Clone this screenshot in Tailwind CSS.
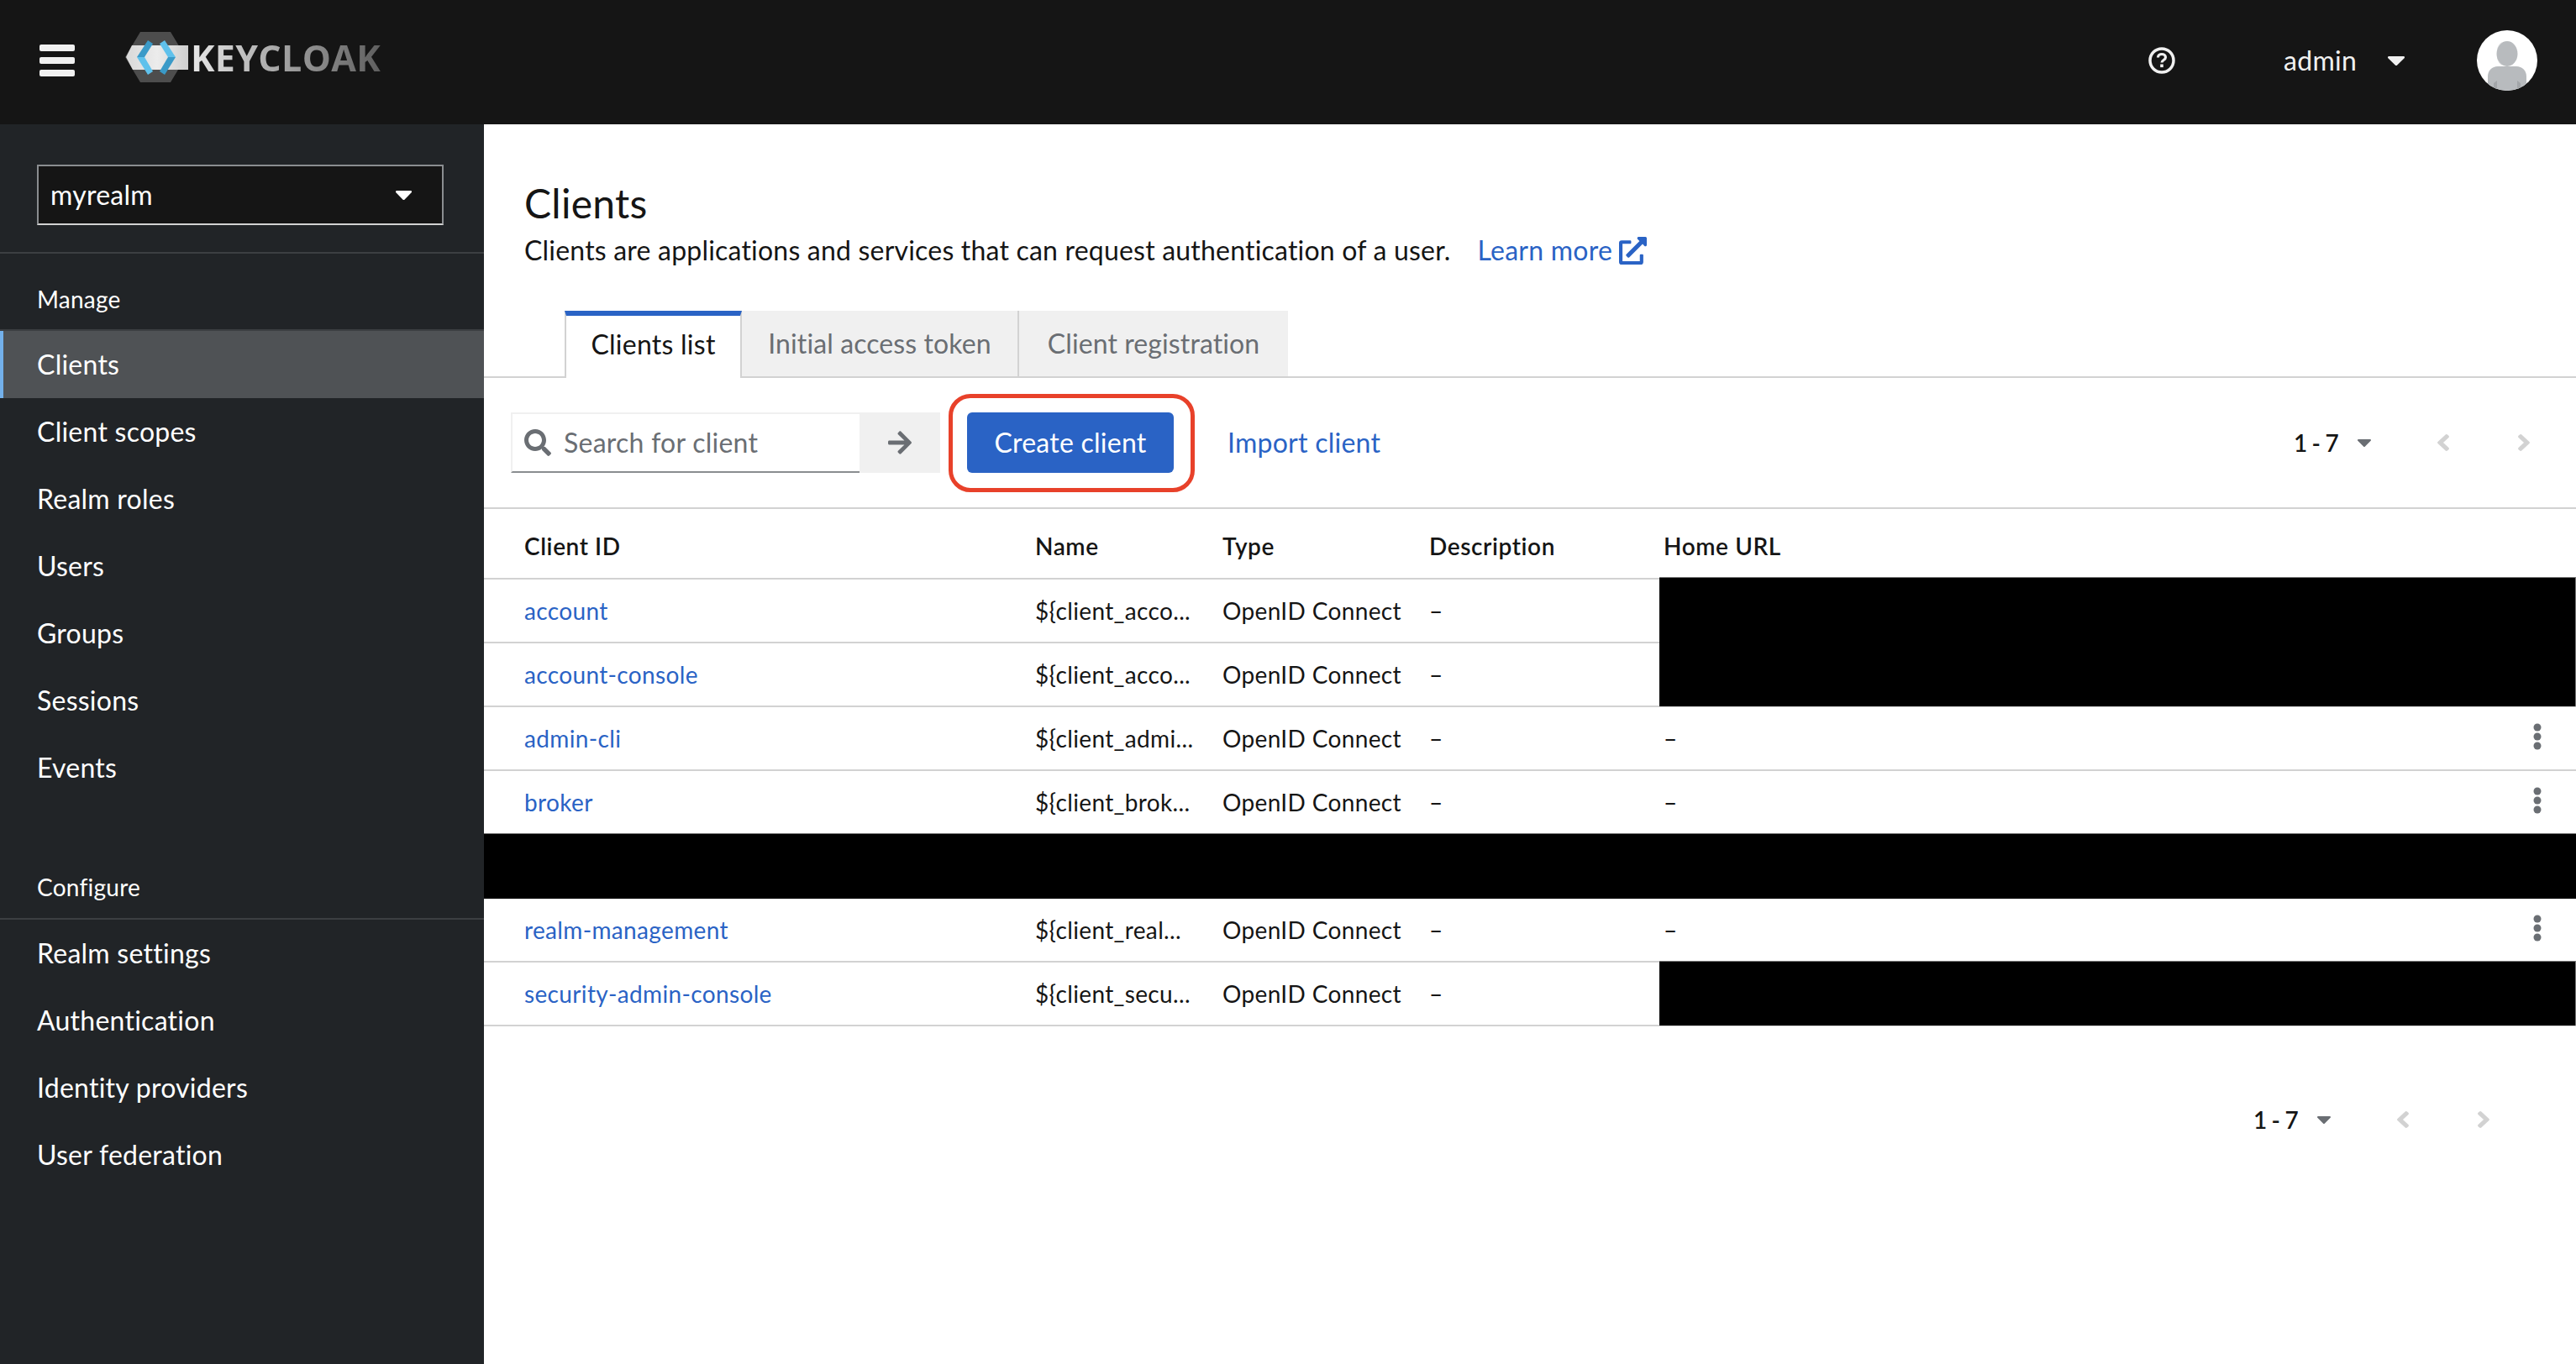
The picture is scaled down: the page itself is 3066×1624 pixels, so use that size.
<!DOCTYPE html>
<html lang="en">
<head>
    <meta charset="UTF-8">
    <title>Keycloak - Clients</title>
    <script src="https://cdn.jsdelivr.net/npm/@tailwindcss/browser@4"></script>
</head>
<body class="bg-white text-[#151515] font-['Lato','Open_Sans',sans-serif] text-[32px] tracking-[0.25px] w-[3066px] h-[1624px] overflow-hidden">
    <!-- Masthead -->
    <header class="h-[148px] pb-[4px] bg-[#151515] flex items-center text-[#f0f0f0]">
        <div class="ml-[47px] w-[42px] h-[38px] flex flex-col justify-between">
            <span class="h-[8px] rounded-[2px] bg-[#f0f0f0]"></span>
            <span class="h-[8px] rounded-[2px] bg-[#f0f0f0]"></span>
            <span class="h-[8px] rounded-[2px] bg-[#f0f0f0]"></span>
        </div>
        <div class="ml-[59px] flex items-center -mt-[8px]">
            <svg class="w-[76px] h-[64px]" viewBox="148 36 76 64">
                <defs>
                    <linearGradient id="band" x1="0" x2="1" y1="0" y2="0">
                        <stop offset="0" stop-color="#d8d8d8"/>
                        <stop offset="0.5" stop-color="#ececec"/>
                        <stop offset="1" stop-color="#cfcfcf"/>
                    </linearGradient>
                </defs>
                <path d="M167 38H203L221 68L203 98H167L149 68z" fill="#4d4d4d"/>
                <path d="M157 54H224V83H158L150 68z" fill="url(#band)"/>
                <path d="M163 68L176 48L182 52L172 68z" fill="#3a9ac8"/>
                <path d="M163 68H172L182 85L176 89z" fill="#5fc1ec"/>
                <path d="M209 68L196 48L190 52L200 68z" fill="#5fc1ec"/>
                <path d="M209 68H200L190 85L196 89z" fill="#3a9ac8"/>
            </svg>
            <span class="ml-[3px] font-['Open_Sans',sans-serif] font-bold text-[43px] leading-none tracking-[0.3px] text-transparent bg-clip-text bg-gradient-to-r from-[#e8e8e8] to-[#5f5f5f]">KEYCLOAK</span>
        </div>
        <svg class="ml-auto w-[32px] h-[32px]" viewBox="0 0 32 32" fill="none">
            <circle cx="16" cy="16" r="14" stroke="#f0f0f0" stroke-width="3.5"/>
            <path d="M11.5 12.5c0-2.6 2-4 4.5-4s4.5 1.4 4.5 3.8c0 3.4-4.5 3-4.5 6.2" stroke="#f0f0f0" stroke-width="3.2"/>
            <rect x="14.2" y="20.5" width="3.6" height="3.6" fill="#f0f0f0"/>
        </svg>
        <span class="ml-[129px] leading-none">admin</span>
        <svg class="ml-[37px] w-[20px] h-[11px]" viewBox="12 192 296 168" preserveAspectRatio="none"><path fill="#f0f0f0" d="M31.3 192h257.3c17.8 0 26.7 21.5 14.1 34.1L174.1 354.8c-7.8 7.8-20.5 7.8-28.3 0L17.2 226.1C4.6 213.5 13.5 192 31.3 192z"/></svg>
        <div class="ml-[86px] mr-[46px] w-[72px] h-[72px] rounded-full bg-white overflow-hidden">
            <svg class="w-full h-full" viewBox="0 0 72 72">
                <ellipse cx="36" cy="28" rx="12.5" ry="15" fill="#b8bbbe"/>
                <path d="M31 13.8C26.5 16 23.5 22 23.5 28S26.5 40 31 42.2C27 41 23.5 35 23.5 28S27 15 31 13.8z" fill="#a3a6a9"/>
                <path d="M13 72V55c0-7 5-12 12-12h22c7 0 12 5 12 12v17z" fill="#b8bbbe"/>
                <path d="M20 72V63l4-3v12zM52 72V63l-4-3v12z" fill="#a3a6a9"/>
            </svg>
        </div>
    </header>

    <div class="flex h-[1476px]">
        <!-- Sidebar -->
        <aside class="w-[576px] bg-[#212427] text-white shrink-0">
            <div class="h-[154px] border-b-2 border-[#3c3f42] pt-[48px] px-[44px]">
                <div class="h-[72px] w-[484px] bg-[#151515] border-2 border-[#8a8d90] border-b-[#d2d2d2] flex items-center justify-between pl-[14px] pr-[36px]">
                    <span>myrealm</span>
                    <svg class="w-[19px] h-[11px]" viewBox="12 192 296 168" preserveAspectRatio="none"><path fill="#fff" d="M31.3 192h257.3c17.8 0 26.7 21.5 14.1 34.1L174.1 354.8c-7.8 7.8-20.5 7.8-28.3 0L17.2 226.1C4.6 213.5 13.5 192 31.3 192z"/></svg>
                </div>
            </div>
            <div class="h-[92px] flex items-end pb-[22px] pl-[44px] text-[28px] leading-none border-b-2 border-[#3c3f42]">Manage</div>
            <nav class="h-[80px] bg-[#4f5255] border-l-4 border-[#73b0ea] pl-[40px] flex items-center">Clients</nav>
            <nav class="h-[80px] pl-[44px] flex items-center">Client scopes</nav>
            <nav class="h-[80px] pl-[44px] flex items-center">Realm roles</nav>
            <nav class="h-[80px] pl-[44px] flex items-center">Users</nav>
            <nav class="h-[80px] pl-[44px] flex items-center">Groups</nav>
            <nav class="h-[80px] pl-[44px] flex items-center">Sessions</nav>
            <nav class="h-[80px] pl-[44px] flex items-center">Events</nav>
            <div class="h-[141px] flex items-end pb-[23px] pl-[44px] text-[28px] leading-none border-b-2 border-[#3c3f42]">Configure</div>
            <nav class="h-[80px] pl-[44px] flex items-center">Realm settings</nav>
            <nav class="h-[80px] pl-[44px] flex items-center">Authentication</nav>
            <nav class="h-[80px] pl-[44px] flex items-center">Identity providers</nav>
            <nav class="h-[80px] pl-[44px] flex items-center">User federation</nav>
        </aside>

        <!-- Main -->
        <main class="flex-1 relative">
            <section class="h-[222px] pl-[48px] pt-[68px]">
                <h1 class="text-[48px] leading-[52px]">Clients</h1>
                <p class="mt-[8px] leading-[44px] flex items-center">
                    <span class="tracking-[0.2px]">Clients are applications and services that can request authentication of a user.</span>
                    <a class="ml-[32px] text-[#2a63c5] flex items-center">Learn more
                        <svg class="ml-[8px] w-[33px] h-[33px]" viewBox="0 0 512 512"><path fill="#2a63c5" d="M432,320H400a16,16,0,0,0-16,16V448H64V128H208a16,16,0,0,0,16-16V80a16,16,0,0,0-16-16H48A48,48,0,0,0,0,112V464a48,48,0,0,0,48,48H400a48,48,0,0,0,48-48V336A16,16,0,0,0,432,320ZM488,0h-128c-21.37,0-32.05,25.91-17,41l35.73,35.73L135,320.37a24,24,0,0,0,0,34L157.67,377a24,24,0,0,0,34,0L435.28,133.32,471,169c15,15,41,4.5,41-17V24A24,24,0,0,0,488,0Z"/></svg>
                    </a>
                </p>
            </section>

            <!-- Tabs -->
            <div class="h-[80px] pl-[96px] flex border-b-2 border-[#d2d2d2]">
                <div class="w-[211px] h-[80px] pb-[6px] bg-white border-t-[6px] border-t-[#2a63c5] border-x-2 border-x-[#d2d2d2] flex items-center justify-center">Clients list</div>
                <div class="w-[330px] h-[78px] bg-[#f0f0f0] border-r-2 border-[#d2d2d2] flex items-center justify-center text-[#6a6e73] tracking-[0.1px]">Initial access token</div>
                <div class="w-[320px] h-[78px] bg-[#f0f0f0] flex items-center justify-center text-[#6a6e73] tracking-[0.1px]">Client registration</div>
            </div>

            <!-- Toolbar -->
            <div class="h-[156px] pt-[41px] pl-[32px] flex items-start border-b-2 border-[#d2d2d2] relative">
                <div class="w-[415px] h-[72px] border-2 border-[#f0f0f0] border-r-0 border-b-[#8a8d90] flex items-center pl-[14px] text-[#6a6e73]">
                    <svg class="w-[32px] h-[32px]" viewBox="0 0 512 512"><path fill="#6a6e73" d="M505 442.7L405.3 343c-4.5-4.5-10.6-7-17-7H372c27.6-35.3 44-79.7 44-128C416 93.1 322.9 0 208 0S0 93.1 0 208s93.1 208 208 208c48.3 0 92.7-16.4 128-44v16.3c0 6.4 2.5 12.5 7 17l99.7 99.7c9.4 9.4 24.6 9.4 33.9 0l28.3-28.3c9.4-9.4 9.4-24.6.1-34zM208 336c-70.7 0-128-57.2-128-128 0-70.7 57.2-128 128-128 70.7 0 128 57.2 128 128 0 70.7-57.2 128-128 128z"/></svg>
                    <span class="ml-[15px]">Search for client</span>
                </div>
                <div class="w-[96px] h-[72px] bg-[#f0f0f0] flex items-center justify-center">
                    <svg class="w-[28px] h-[32px]" viewBox="0 0 448 512"><path fill="#6a6e73" d="M190.5 66.9l22.2-22.2c9.4-9.4 24.6-9.4 33.9 0L441 239c9.4 9.4 9.4 24.6 0 33.9L246.6 467.3c-9.4 9.4-24.6 9.4-33.9 0l-22.2-22.2c-9.5-9.5-9.3-25 .4-34.3L311.4 296H24c-13.3 0-24-10.7-24-24v-32c0-13.3 10.7-24 24-24h287.4L190.9 101.2c-9.8-9.3-10-24.8-.4-34.3z"/></svg>
                </div>
                <div class="ml-[32px] w-[246px] h-[72px] bg-[#2a63c5] rounded-[6px] text-white flex items-center justify-center">Create client</div>
                <div class="ml-[64px] h-[72px] flex items-center text-[#2a63c5]">Import client</div>
                <div class="absolute left-[553px] top-[19px] w-[293px] h-[117px] border-[5px] border-[#e8412a] rounded-[26px]"></div>
                <div class="ml-auto mr-[55px] h-[72px] flex items-center">
                    <span class="text-[28px] font-semibold [word-spacing:-2px]">1 - 7</span>
                    <svg class="ml-[22px] w-[16px] h-[9px]" viewBox="12 192 296 168" preserveAspectRatio="none"><path fill="#6a6e73" d="M31.3 192h257.3c17.8 0 26.7 21.5 14.1 34.1L174.1 354.8c-7.8 7.8-20.5 7.8-28.3 0L17.2 226.1C4.6 213.5 13.5 192 31.3 192z"/></svg>
                    <svg class="ml-[79px] w-[14px] h-[20px]" viewBox="24 96 208 320" preserveAspectRatio="none"><path fill="#d2d2d2" d="M31.7 239l136-136c9.4-9.4 24.6-9.4 33.9 0l22.6 22.6c9.4 9.4 9.4 24.6 0 33.9L127.9 256l96.4 96.4c9.4 9.4 9.4 24.6 0 33.9L201.7 409c-9.4 9.4-24.6 9.4-33.9 0l-136-136c-9.5-9.4-9.5-24.6-.1-34z"/></svg>
                    <svg class="ml-[82px] w-[14px] h-[20px]" viewBox="24 96 208 320" preserveAspectRatio="none"><path fill="#d2d2d2" d="M224.3 273l-136 136c-9.4 9.4-24.6 9.4-33.9 0l-22.6-22.6c-9.4-9.4-9.4-24.6 0-33.9l96.4-96.4-96.4-96.4c-9.4-9.4-9.4-24.6 0-33.9L54.3 103c9.4-9.4 24.6-9.4 33.9 0l136 136c9.5 9.4 9.5 24.6.1 34z"/></svg>
                </div>
            </div>

            <!-- Table -->
            <div class="relative text-[28px] tracking-[0.35px]">
                <div class="h-[84px] pt-[6px] flex items-center pl-[48px] border-b-2 border-[#d2d2d2] font-semibold tracking-[0.6px]">
                    <div class="w-[608px]">Client ID</div><div class="w-[223px]">Name</div><div class="w-[246px]">Type</div><div class="w-[279px]">Description</div><div>Home URL</div>
                </div>
                <div class="h-[76px] flex items-center pl-[48px] border-b-2 border-[#d2d2d2]">
                    <div class="w-[608px] text-[#2a63c5]">account</div><div class="w-[223px]">${client_acco...</div><div class="w-[246px]">OpenID Connect</div><div class="w-[279px]">–</div>
                </div>
                <div class="h-[76px] flex items-center pl-[48px] border-b-2 border-[#d2d2d2]">
                    <div class="w-[608px] text-[#2a63c5]">account-console</div><div class="w-[223px]">${client_acco...</div><div class="w-[246px]">OpenID Connect</div><div class="w-[279px]">–</div>
                </div>
                <div class="h-[76px] flex items-center pl-[48px] border-b-2 border-[#d2d2d2]">
                    <div class="w-[608px] text-[#2a63c5]">admin-cli</div><div class="w-[223px]">${client_admi...</div><div class="w-[246px]">OpenID Connect</div><div class="w-[279px]">–</div><div>–</div>
                    <svg class="ml-auto mr-[41px] -mt-[4px] w-[10px] h-[32px]" viewBox="0 0 10 32"><circle cx="5" cy="5" r="4.5" fill="#6a6e73"/><circle cx="5" cy="16" r="4.5" fill="#6a6e73"/><circle cx="5" cy="27" r="4.5" fill="#6a6e73"/></svg>
                </div>
                <div class="h-[76px] flex items-center pl-[48px] border-b-2 border-[#d2d2d2]">
                    <div class="w-[608px] text-[#2a63c5]">broker</div><div class="w-[223px]">${client_brok...</div><div class="w-[246px]">OpenID Connect</div><div class="w-[279px]">–</div><div>–</div>
                    <svg class="ml-auto mr-[41px] -mt-[4px] w-[10px] h-[32px]" viewBox="0 0 10 32"><circle cx="5" cy="5" r="4.5" fill="#6a6e73"/><circle cx="5" cy="16" r="4.5" fill="#6a6e73"/><circle cx="5" cy="27" r="4.5" fill="#6a6e73"/></svg>
                </div>
                <div class="h-[78px] -mt-[2px] bg-black border-t border-[#777]"></div>
                <div class="h-[76px] flex items-center pl-[48px] border-b-2 border-[#d2d2d2]">
                    <div class="w-[608px] text-[#2a63c5]">realm-management</div><div class="w-[223px]">${client_real...</div><div class="w-[246px]">OpenID Connect</div><div class="w-[279px]">–</div><div>–</div>
                    <svg class="ml-auto mr-[41px] -mt-[4px] w-[10px] h-[32px]" viewBox="0 0 10 32"><circle cx="5" cy="5" r="4.5" fill="#6a6e73"/><circle cx="5" cy="16" r="4.5" fill="#6a6e73"/><circle cx="5" cy="27" r="4.5" fill="#6a6e73"/></svg>
                </div>
                <div class="h-[76px] flex items-center pl-[48px] border-b-2 border-[#d2d2d2]">
                    <div class="w-[608px] text-[#2a63c5]">security-admin-console</div><div class="w-[223px]">${client_secu...</div><div class="w-[246px]">OpenID Connect</div><div class="w-[279px]">–</div>
                </div>
                <!-- redacted Home URL cells -->
                <div class="absolute left-[1399px] right-0 top-[81px] h-[154px] bg-black border-t border-r border-[#777]"></div>
                <div class="absolute left-[1399px] right-0 top-[538px] h-[77px] bg-black border-t border-r border-[#777]"></div>
            </div>

            <!-- Bottom pagination -->
            <div class="h-[72px] mt-[75px] flex items-center justify-end pr-[103px]">
                <span class="text-[28px] font-semibold [word-spacing:-2px]">1 - 7</span>
                <svg class="ml-[22px] w-[16px] h-[9px]" viewBox="12 192 296 168" preserveAspectRatio="none"><path fill="#6a6e73" d="M31.3 192h257.3c17.8 0 26.7 21.5 14.1 34.1L174.1 354.8c-7.8 7.8-20.5 7.8-28.3 0L17.2 226.1C4.6 213.5 13.5 192 31.3 192z"/></svg>
                <svg class="ml-[79px] w-[14px] h-[20px]" viewBox="24 96 208 320" preserveAspectRatio="none"><path fill="#d2d2d2" d="M31.7 239l136-136c9.4-9.4 24.6-9.4 33.9 0l22.6 22.6c9.4 9.4 9.4 24.6 0 33.9L127.9 256l96.4 96.4c9.4 9.4 9.4 24.6 0 33.9L201.7 409c-9.4 9.4-24.6 9.4-33.9 0l-136-136c-9.5-9.4-9.5-24.6-.1-34z"/></svg>
                <svg class="ml-[82px] w-[14px] h-[20px]" viewBox="24 96 208 320" preserveAspectRatio="none"><path fill="#d2d2d2" d="M224.3 273l-136 136c-9.4 9.4-24.6 9.4-33.9 0l-22.6-22.6c-9.4-9.4-9.4-24.6 0-33.9l96.4-96.4-96.4-96.4c-9.4-9.4-9.4-24.6 0-33.9L54.3 103c9.4-9.4 24.6-9.4 33.9 0l136 136c9.5 9.4 9.5 24.6.1 34z"/></svg>
            </div>
        </main>
    </div>
</body>
</html>
